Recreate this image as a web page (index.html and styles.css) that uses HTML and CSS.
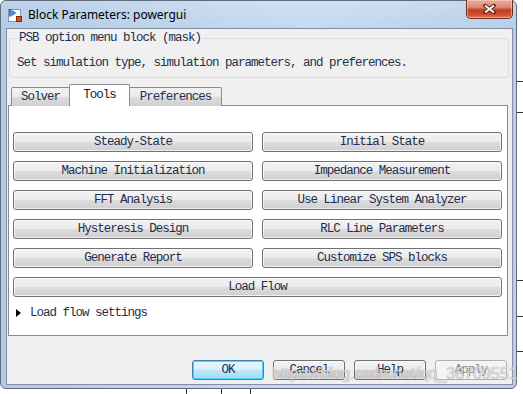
FILE: index.html
```html
<!DOCTYPE html>
<html>
<head>
    <link rel="stylesheet" href="styles.css">
</head>
<body>
    <div class="desktop">
        <div class="window">
            <div class="titlebar">
                <svg class="app-icon" width="16" height="16" viewBox="0 0 16 16">
                    <rect x="1.5" y="2.5" width="12" height="12" fill="#fff" stroke="#8493a8"/>
                    <path d="M3 2 L3 9.5" stroke="#1d3f86" stroke-width="1.4"/>
                    <path d="M4.2 2.5 L9.5 6 L4.2 9.5 Z" fill="#3d86d8"/>
                    <rect x="9.5" y="9.5" width="5" height="5" fill="#e2461f" stroke="#8c2410"/>
                </svg>
                <span class="title">Block Parameters: powergui</span>
                <div class="close-btn">
                    <svg width="13" height="10" viewBox="0 0 13 10">
                        <path d="M2 1.5 L11 8.5 M11 1.5 L2 8.5" stroke="#5a2015" stroke-width="3.6" stroke-linecap="round"/>
                        <path d="M2 1.5 L11 8.5 M11 1.5 L2 8.5" stroke="#fff" stroke-width="1.8"/>
                    </svg>
                </div>
            </div>
            <div class="client">
                <fieldset class="mask-group">
                    <legend>PSB option menu block (mask)</legend>
                    <p>Set simulation type, simulation parameters, and preferences.</p>
                </fieldset>

                <div class="tabs">
                    <div class="tab">Solver</div>
                    <div class="tab active">Tools</div>
                    <div class="tab">Preferences</div>
                </div>
                <div class="tab-panel">
                    <div class="tool-grid">
                        <button>Steady-State</button>
                        <button>Initial State</button>
                        <button>Machine Initialization</button>
                        <button>Impedance Measurement</button>
                        <button>FFT Analysis</button>
                        <button>Use Linear System Analyzer</button>
                        <button>Hysteresis Design</button>
                        <button>RLC Line Parameters</button>
                        <button>Generate Report</button>
                        <button>Customize SPS blocks</button>
                        <button class="wide">Load Flow</button>
                    </div>
                    <div class="expander"><span class="arrow"></span>Load flow settings</div>
                </div>

                <div class="dialog-buttons">
                    <button class="default">OK</button>
                    <button>Cancel</button>
                    <button>Help</button>
                    <button disabled>Apply</button>
                </div>

                <div class="watermark">https://blog.csdn.net/qq_38709551</div>
            </div>
        </div>
        <div class="side-strip"></div>
    </div>
    <div class="bottom-strip"></div>
</body>
</html>
```

FILE: styles.css
```css
body {
    margin: 0;
    width: 523px;
    height: 394px;
    overflow: hidden;
    background: #fff;
    font-family: "Liberation Mono", monospace;
    font-size: 12.5px;
    letter-spacing: -1px;
    color: #22304c;
}
.desktop {
    display: flex;
    height: 389px;
}
.window {
    width: 517px;
    height: 389px;
    box-sizing: border-box;
    border: 1px solid #5f6d7d;
    border-radius: 6px;
    background: linear-gradient(to right, rgba(170,195,225,0.5), rgba(215,230,247,0.3) 60%, rgba(175,200,230,0.4)),
                linear-gradient(to bottom, #cfe0f3 0, #bcd3ed 28px, #bdd4ee 100%);
    display: flex;
    flex-direction: column;
}
.titlebar {
    height: 27px;
    display: flex;
    align-items: center;
    padding-left: 6px;
}
.app-icon {
    flex: none;
}
.title {
    margin-left: 5px;
    font-family: "Noto Sans", sans-serif;
    font-size: 12px;
    letter-spacing: 0;
    color: #000;
}
.close-btn {
    margin-left: auto;
    margin-right: 3px;
    margin-top: -1px;
    align-self: flex-start;
    width: 47px;
    height: 19px;
    box-sizing: border-box;
    border: 1px solid #6d2a1f;
    border-top: none;
    border-radius: 0 0 5px 5px;
    background: linear-gradient(to bottom, #e9ab9c 0%, #db8a76 40%, #c63c22 55%, #cc4f32 80%, #d87a5c 100%);
    box-shadow: inset 0 0 0 1px rgba(255,220,210,0.5);
    display: flex;
    align-items: center;
    justify-content: center;
}
.client {
    position: relative;
    margin: 0 3px 3px 5px;
    height: 357px;
    box-sizing: border-box;
    border: 1px solid #838f9e;
    background: #f0f0f0;
    padding: 0 3px 0 1px;
}

/* group box */
.mask-group {
    margin: 2px 0 0 1px;
    width: 500px;
    box-sizing: border-box;
    padding: 11px 7px 7px 7px;
    border: 1px solid #d5dfe5;
    border-radius: 3px;
}
.mask-group legend {
    padding: 0 2px;
    line-height: 14px;
}
.mask-group p {
    margin: 0;
    line-height: 14px;
}

/* tabs */
.tabs {
    display: flex;
    align-items: flex-end;
    height: 22px;
    margin: 6px 0 -1px 3px;
}
.tab {
    height: 19px;
    box-sizing: border-box;
    border: 1px solid #898c95;
    border-bottom: none;
    border-radius: 2px 2px 0 0;
    background: linear-gradient(to bottom, #f2f2f2 0%, #ebebeb 50%, #dddddd 51%, #cfcfcf 100%);
    text-align: center;
    line-height: 19px;
    margin-left: -1px;
}
.tab:nth-child(1) { width: 59px; margin-left: 0; }
.tab:nth-child(2) { width: 61px; }
.tab:nth-child(3) { width: 93px; }
.tab.active {
    position: relative;
    z-index: 1;
    height: 22px;
    line-height: 21px;
    background: #fff;
    color: #1a1a1a;
}
.tab-panel {
    height: 231px;
    box-sizing: border-box;
    margin-right: 1px;
    border: 1px solid #898c95;
    background: #fff;
    padding: 26px 5px 0 4px;
}
.tool-grid {
    display: grid;
    grid-template-columns: 240px 240px;
    grid-auto-rows: 20px;
    gap: 9px;
}
.tool-grid .wide {
    grid-column: 1 / -1;
}
button {
    font-family: "Liberation Mono", monospace;
    font-size: 12.5px;
    letter-spacing: -1px;
    color: #1e2d4d;
    height: 20px;
    padding: 0;
    line-height: 19px;
    border: 1px solid #707070;
    border-radius: 3px;
    background: linear-gradient(to bottom, #f2f2f2 0%, #ebebeb 50%, #dddddd 51%, #cfcfcf 100%);
    box-shadow: inset 0 0 0 1px rgba(255,255,255,0.7);
}
.expander {
    margin: 9px 0 0 3px;
    display: flex;
    align-items: center;
    line-height: 14px;
}
.arrow {
    width: 0;
    height: 0;
    border-left: 5px solid #000;
    border-top: 4px solid transparent;
    border-bottom: 4px solid transparent;
    margin-right: 9px;
}
.dialog-buttons {
    display: flex;
    justify-content: flex-end;
    gap: 9px;
    margin: 24px 2px 0 0;
}
.dialog-buttons button {
    width: 72px;
}
.dialog-buttons .default {
    border-color: #3c7fb1;
    background: linear-gradient(to bottom, #eaf6fd 0%, #d9f0fc 50%, #bee6fd 51%, #a7d9f5 100%);
    box-shadow: inset 0 0 0 1px #48d8fb;
}
.dialog-buttons button:disabled {
    border-color: #adb2b5;
    background: #f4f4f4;
    color: #8a8a8a;
    box-shadow: none;
}
.watermark {
    position: absolute;
    left: 265px;
    bottom: 1px;
    font-family: "Liberation Sans", sans-serif;
    font-size: 16px;
    letter-spacing: 0;
    line-height: 18px;
    color: rgba(255,255,255,0.7);
    text-shadow: 0 0 1px rgba(90,90,90,0.8);
    white-space: nowrap;
}

/* background windows behind the dialog */
.side-strip {
    width: 6px;
    height: 389px;
    background:
        linear-gradient(#333, #333) 0 81px / 100% 1px no-repeat,
        linear-gradient(#333, #333) 0 112px / 100% 1px no-repeat,
        linear-gradient(#333, #333) 0 280px / 100% 1px no-repeat,
        linear-gradient(#333, #333) 0 316px / 100% 1px no-repeat,
        linear-gradient(#333, #333) 0 351px / 100% 1px no-repeat,
        #fff;
}
.bottom-strip {
    height: 5px;
    background:
        linear-gradient(#333, #333) 186px 0 / 1px 100% no-repeat,
        linear-gradient(#333, #333) 221px 0 / 1px 100% no-repeat,
        linear-gradient(#333, #333) 250px 0 / 1px 100% no-repeat,
        #fff;
}
```
